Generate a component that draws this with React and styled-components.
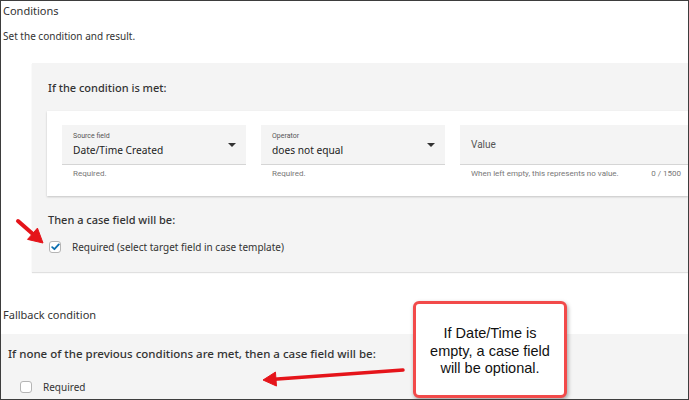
import React from "react";
import styled, { createGlobalStyle } from "styled-components";

const Global = createGlobalStyle`
  body {
    margin: 0;
    background: #ffffff;
    font-family: "Noto Sans", "Open Sans", Arial, sans-serif;
    color: #333333;
  }
`;

const Frame = styled.div`
  position: relative;
  width: 689px;
  height: 400px;
  box-sizing: border-box;
  border: 1px solid #3d3d3d;
  overflow: hidden;
  background: #ffffff;
`;

const Heading = styled.div`
  font-size: 11px;
  line-height: 16px;
  margin: ${(p) => p.$top}px 0 0 2px;
  color: #333;
`;

const Sub = styled.div`
  font-size: 10px;
  line-height: 14px;
  margin: 10px 0 0 2px;
  color: #333;
`;

const Panel = styled.div`
  background: #f4f4f4;
  margin: ${(p) => p.$top}px 0 0 ${(p) => p.$left}px;
  padding: ${(p) => p.$pad};
  height: ${(p) => p.$h}px;
  box-sizing: border-box;
  box-shadow: 0 1px 1px rgba(0, 0, 0, 0.12);
`;

const PanelTitle = styled.div`
  font-size: ${(p) => p.$size || 11}px;
  line-height: 16px;
  font-weight: 500;
  color: #333;
  margin-top: ${(p) => p.$top || 0}px;
  margin-left: ${(p) => p.$left || 0}px;
`;

const Card = styled.div`
  background: #ffffff;
  margin-top: 15px;
  padding: 14px 0 0 15px;
  height: 85px;
  box-sizing: border-box;
  box-shadow: 0 1px 2px rgba(0, 0, 0, 0.2);
`;

const Fields = styled.div`
  display: flex;
  gap: 15px;
`;

const Field = styled.div`
  display: flex;
  flex-direction: column;
  width: ${(p) => (p.$grow ? "auto" : "184px")};
  flex: ${(p) => (p.$grow ? 1 : "none")};
`;

const Box = styled.div`
  position: relative;
  height: 39px;
  background: #f4f4f4;
  border-bottom: 1px solid #d5d5d5;
  padding-left: 11px;
  display: flex;
  flex-direction: column;
  justify-content: center;
`;

const Label = styled.div`
  font-family: Roboto, "Liberation Sans", sans-serif;
  font-size: 7px;
  line-height: 9px;
  color: #555;
`;

const Value = styled.div`
  font-size: 10.2px;
  line-height: 14px;
  margin-top: 2px;
  color: #222;
`;

const Placeholder = styled.div`
  font-family: Roboto, "Liberation Sans", sans-serif;
  font-size: 10px;
  color: #555;
`;

const Caret = styled.span`
  position: absolute;
  right: 10px;
  top: 18px;
  width: 0;
  height: 0;
  border-left: 4px solid transparent;
  border-right: 4px solid transparent;
  border-top: 4px solid #333;
`;

const Help = styled.div`
  display: flex;
  justify-content: space-between;
  font-family: Roboto, "Liberation Sans", sans-serif;
  font-size: 8px;
  line-height: 12px;
  margin-top: 3px;
  padding: 0 ${(p) => (p.$value ? "7px" : "0")} 0 11px;
  color: #777;
`;

const Row = styled.div`
  display: flex;
  align-items: center;
  margin: ${(p) => p.$top}px 0 0 ${(p) => p.$left}px;
  gap: 11px;
  font-size: 10px;
  color: #333;
`;

const Check = styled.span`
  width: 12px;
  height: 12px;
  box-sizing: border-box;
  border: 1px solid #b5b5b5;
  border-radius: 3px;
  background: #ffffff;
  display: inline-flex;
  align-items: center;
  justify-content: center;
`;

const Callout = styled.div`
  position: absolute;
  left: 412px;
  top: 300px;
  width: 154px;
  height: 97px;
  box-sizing: border-box;
  border: 3px solid #f24a4a;
  border-radius: 6px;
  background: #ffffff;
  box-shadow: 1px 2px 4px rgba(0, 0, 0, 0.35);
  display: flex;
  align-items: center;
  justify-content: center;
  text-align: center;
  font-family: "Liberation Sans", Arial, sans-serif;
  font-size: 14.5px;
  line-height: 17.5px;
  color: #111;
  padding-top: 4px;
`;

const Overlay = styled.svg`
  position: absolute;
  left: 0;
  top: 0;
  pointer-events: none;
`;

function arrow(x1, y1, x2, y2, head, half) {
  const dx = x2 - x1;
  const dy = y2 - y1;
  const len = Math.hypot(dx, dy);
  const ux = dx / len;
  const uy = dy / len;
  const bx = x2 - ux * head;
  const by = y2 - uy * head;
  const px = -uy;
  const py = ux;
  return {
    line: [x1, y1, bx + ux * 2, by + uy * 2],
    head: `${x2},${y2} ${bx + px * half},${by + py * half} ${bx - px * half},${by - py * half}`,
  };
}

function Arrow({ from, to, head = 12, half = 6, width = 3.5 }) {
  const a = arrow(from[0], from[1], to[0], to[1], head, half);
  return (
    <g>
      <line
        x1={a.line[0]}
        y1={a.line[1]}
        x2={a.line[2]}
        y2={a.line[3]}
        stroke="#e5141a"
        strokeWidth={width}
        strokeLinecap="round"
      />
      <polygon points={a.head} fill="#e5141a" strokeLinejoin="round" stroke="#e5141a" strokeWidth="1" />
    </g>
  );
}

export default function App() {
  return (
    <>
      <Global />
      <Frame>
        <Heading $top={2}>Conditions</Heading>
        <Sub>Set the condition and result.</Sub>

        <Panel $top={20} $left={31} $pad="17px 0 0 15px" $h={209}>
          <PanelTitle $left={1}>If the condition is met:</PanelTitle>
          <Card>
            <Fields>
              <Field>
                <Box>
                  <Label>Source field</Label>
                  <Value>Date/Time Created</Value>
                  <Caret />
                </Box>
                <Help>Required.</Help>
              </Field>
              <Field>
                <Box>
                  <Label>Operator</Label>
                  <Value>does not equal</Value>
                  <Caret />
                </Box>
                <Help>Required.</Help>
              </Field>
              <Field $grow>
                <Box>
                  <Placeholder>Value</Placeholder>
                </Box>
                <Help $value>
                  <span>When left empty, this represents no value.</span>
                  <span>0 / 1500</span>
                </Help>
              </Field>
            </Fields>
          </Card>
          <PanelTitle $top={16} $left={1}>
            Then a case field will be:
          </PanelTitle>
          <Row $top={12} $left={2}>
            <Check>
              <svg width="9" height="8" viewBox="0 0 9 8">
                <path d="M1.2 4.2 L3.4 6.2 L7.8 1.4" fill="none" stroke="#0b6fb0" strokeWidth="1.8" strokeLinecap="round" strokeLinejoin="round" />
              </svg>
            </Check>
            <span>Required (select target field in case template)</span>
          </Row>
        </Panel>

        <Heading $top={35}>Fallback condition</Heading>
        <Panel $top={11} $left={0} $pad="12px 0 0 7px" $h={80}>
          <PanelTitle $size={11.5}>
            If none of the previous conditions are met, then a case field will be:
          </PanelTitle>
          <Row $top={18} $left={12}>
            <Check />
            <span>Required</span>
          </Row>
        </Panel>

        <Overlay width="689" height="400" viewBox="0 0 689 400">
          <Arrow from={[17, 220]} to={[42, 242]} head={14} half={7.5} width={4} />
          <Arrow from={[402, 369]} to={[262, 379]} head={13} half={7} width={3.5} />
        </Overlay>

        <Callout>
          <div>
            If Date/Time is
            <br />
            empty, a case field
            <br />
            will be optional.
          </div>
        </Callout>
      </Frame>
    </>
  );
}
